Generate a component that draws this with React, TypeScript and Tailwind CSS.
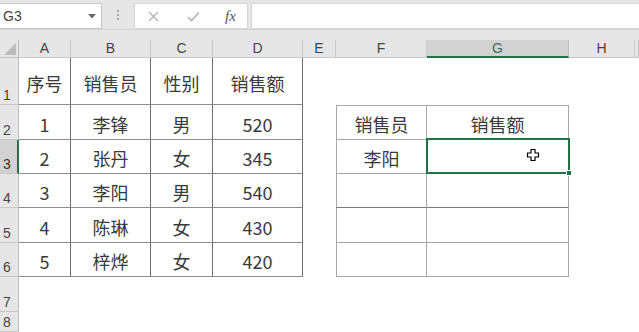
import React from "react";

const leftRows = [
  ["序号", "销售员", "性别", "销售额"],
  ["1", "李锋", "男", "520"],
  ["2", "张丹", "女", "345"],
  ["3", "李阳", "男", "540"],
  ["4", "陈琳", "女", "430"],
  ["5", "梓烨", "女", "420"],
];

const rightRows = [
  ["销售员", "销售额"],
  ["李阳", ""],
  ["", ""],
  ["", ""],
  ["", ""],
];

const colLetters = ["A", "B", "C", "D", "E", "F", "G", "H", ""];
const rowNums = ["1", "2", "3", "4", "5", "6", "7", "8"];

const cjk = "font-['Noto_Sans_CJK_SC','Liberation_Sans',sans-serif]";

const FormulaBar = () => (
  <div className="h-[40px] bg-[#e6e6e6] relative">
    <div className="flex items-start h-[30px] border-b border-[#d4d4d4]">
      {/* Name box */}
      <div className="mt-[3px] w-[102px] h-[26px] bg-white border border-l-0 border-[#c6c6c6] flex items-center justify-between pl-[3px] pr-[5px]">
        <span className="text-[14px] text-[#444] font-['Liberation_Sans',sans-serif]">G3</span>
        <svg width="8" height="5" viewBox="0 0 8 5">
          <path d="M0 0 L8 0 L4 4.5 Z" fill="#6a6a6a" />
        </svg>
      </div>
      {/* grip dots */}
      <div className="w-[32px] h-[30px] flex flex-col items-center justify-center gap-[2px]">
        <div className="w-[2px] h-[2px] bg-[#a6a6a6]" />
        <div className="w-[2px] h-[2px] bg-[#a6a6a6]" />
        <div className="w-[2px] h-[2px] bg-[#a6a6a6]" />
      </div>
      {/* cancel / enter / fx */}
      <div className="mt-[3px] w-[114px] h-[26px] bg-white border border-[#d6d6d6] flex items-center">
        <svg className="ml-[13px]" width="11" height="11" viewBox="0 0 11 11">
          <path d="M1 1 L10 10 M10 1 L1 10" stroke="#b4b4b4" strokeWidth="1.3" />
        </svg>
        <svg className="ml-[28px]" width="13" height="11" viewBox="0 0 13 11">
          <path d="M1 6 L4.5 9.5 L12 1.5" stroke="#b4b4b4" strokeWidth="1.6" fill="none" />
        </svg>
        <span className="ml-[25px] text-[15px] italic text-[#555] font-['Liberation_Serif',serif] leading-none">
          fx
        </span>
      </div>
      {/* formula input */}
      <div className="mt-[3px] ml-[3px] flex-1 h-[26px] bg-white border border-r-0 border-[#d6d6d6]" />
    </div>
  </div>
);

const App = () => {
  const cells: React.ReactNode[] = [];

  // header row
  cells.push(
    <div key="corner" className="bg-[#e6e6e6] border-r border-b border-[#bdbdbd] flex items-end justify-end pr-[2px] pb-[2px]">
      <svg width="12" height="12" viewBox="0 0 12 12">
        <path d="M12 0 L12 12 L0 12 Z" fill="#bcbcbc" />
      </svg>
    </div>
  );
  colLetters.forEach((l, i) => {
    const sel = l === "G";
    cells.push(
      <div
        key={"h" + i}
        className={
          sel
            ? "bg-[#d2d2d2] border-r border-[#bdbdbd] border-b-2 border-b-[#217346] flex items-center justify-center text-[14px] text-[#41705f] font-['Liberation_Sans',sans-serif]"
            : "bg-[#e6e6e6] border-r border-b border-[#c8c8c8] flex items-center justify-center text-[14px] text-[#444] font-['Liberation_Sans',sans-serif]"
        }
      >
        {l}
      </div>
    );
  });

  rowNums.forEach((n, ri) => {
    const r = ri + 1;
    cells.push(
      <div
        key={"r" + r}
        className={
          r === 3
            ? "bg-[#d2d2d2] border-b border-[#c8c8c8] border-r-2 border-r-[#217346] flex items-end pl-[3px] text-[14px] text-[#333] font-['Liberation_Sans',sans-serif] leading-[18px]"
            : "bg-[#e6e6e6] border-b border-[#c8c8c8] border-r border-r-[#bdbdbd] flex items-end pl-[3px] text-[14px] text-[#444] font-['Liberation_Sans',sans-serif] leading-[18px]"
        }
      >
        {n}
      </div>
    );

    for (let c = 1; c <= 9; c++) {
      let cls = "bg-white";
      let text = "";
      let extra: React.ReactNode = null;
      if (r <= 6 && c <= 4) {
        text = leftRows[r - 1][c - 1];
        cls =
          "bg-white border-r border-b border-r-[#6e6e6e] border-b-[#8c8c8c] flex items-center justify-center pt-[3px]";
      } else if (r >= 2 && r <= 6 && (c === 6 || c === 7)) {
        text = rightRows[r - 2][c - 6];
        const first = c === 6;
        const top = r === 2;
        const dark = r === 4;
        if (first && top) {
          cls = "bg-white border border-[#a8a8a8] flex items-center justify-center pt-[3px]";
        } else if (first && dark) {
          cls = "bg-white border-l border-r border-b border-[#a8a8a8] border-b-[#7a7a7a] flex items-center justify-center pt-[3px]";
        } else if (first) {
          cls = "bg-white border-l border-r border-b border-[#a8a8a8] flex items-center justify-center pt-[3px]";
        } else if (top) {
          cls = "bg-white border-t border-r border-b border-[#a8a8a8] flex items-center justify-center pt-[3px]";
        } else if (dark) {
          cls = "bg-white border-r border-b border-[#a8a8a8] border-b-[#7a7a7a] flex items-center justify-center pt-[3px]";
        } else if (r === 3) {
          cls = "bg-white border-r border-b border-[#a8a8a8] relative";
          extra = (
            <>
              <div className="absolute -left-px -top-[2px] -right-[2px] -bottom-[1px] border-2 border-[#217346]" />
              <div className="absolute -right-[4px] -bottom-[3px] w-[6px] h-[6px] bg-[#217346] border border-white" />
              <svg className="absolute left-[99px] top-[8px]" width="14" height="14" viewBox="0 0 14 14">
                <path
                  d="M5 1.5 H9 V5 H12.5 V9 H9 V12.5 H5 V9 H1.5 V5 H5 Z"
                  fill="white"
                  stroke="black"
                  strokeWidth="1.2"
                />
              </svg>
            </>
          );
        } else {
          cls = "bg-white border-r border-b border-[#a8a8a8] flex items-center justify-center pt-[3px]";
        }
      }
      cells.push(
        <div key={"c" + r + "-" + c} className={cls}>
          {text && (
            <span className={"text-[18px] leading-none text-[#3a3a3a] " + cjk}>{text}</span>
          )}
          {extra}
        </div>
      );
    }
  });

  return (
    <div className="w-[639px] h-[332px] overflow-hidden bg-white">
      <FormulaBar />
      <div className="grid h-[292px] grid-cols-[19px_52px_80px_62px_90px_33px_91px_142px_66px_1fr] grid-rows-[18px_47px_35px_34px_34px_35px_34px_35px_20px]">
        {cells}
      </div>
    </div>
  );
};

export default App;
